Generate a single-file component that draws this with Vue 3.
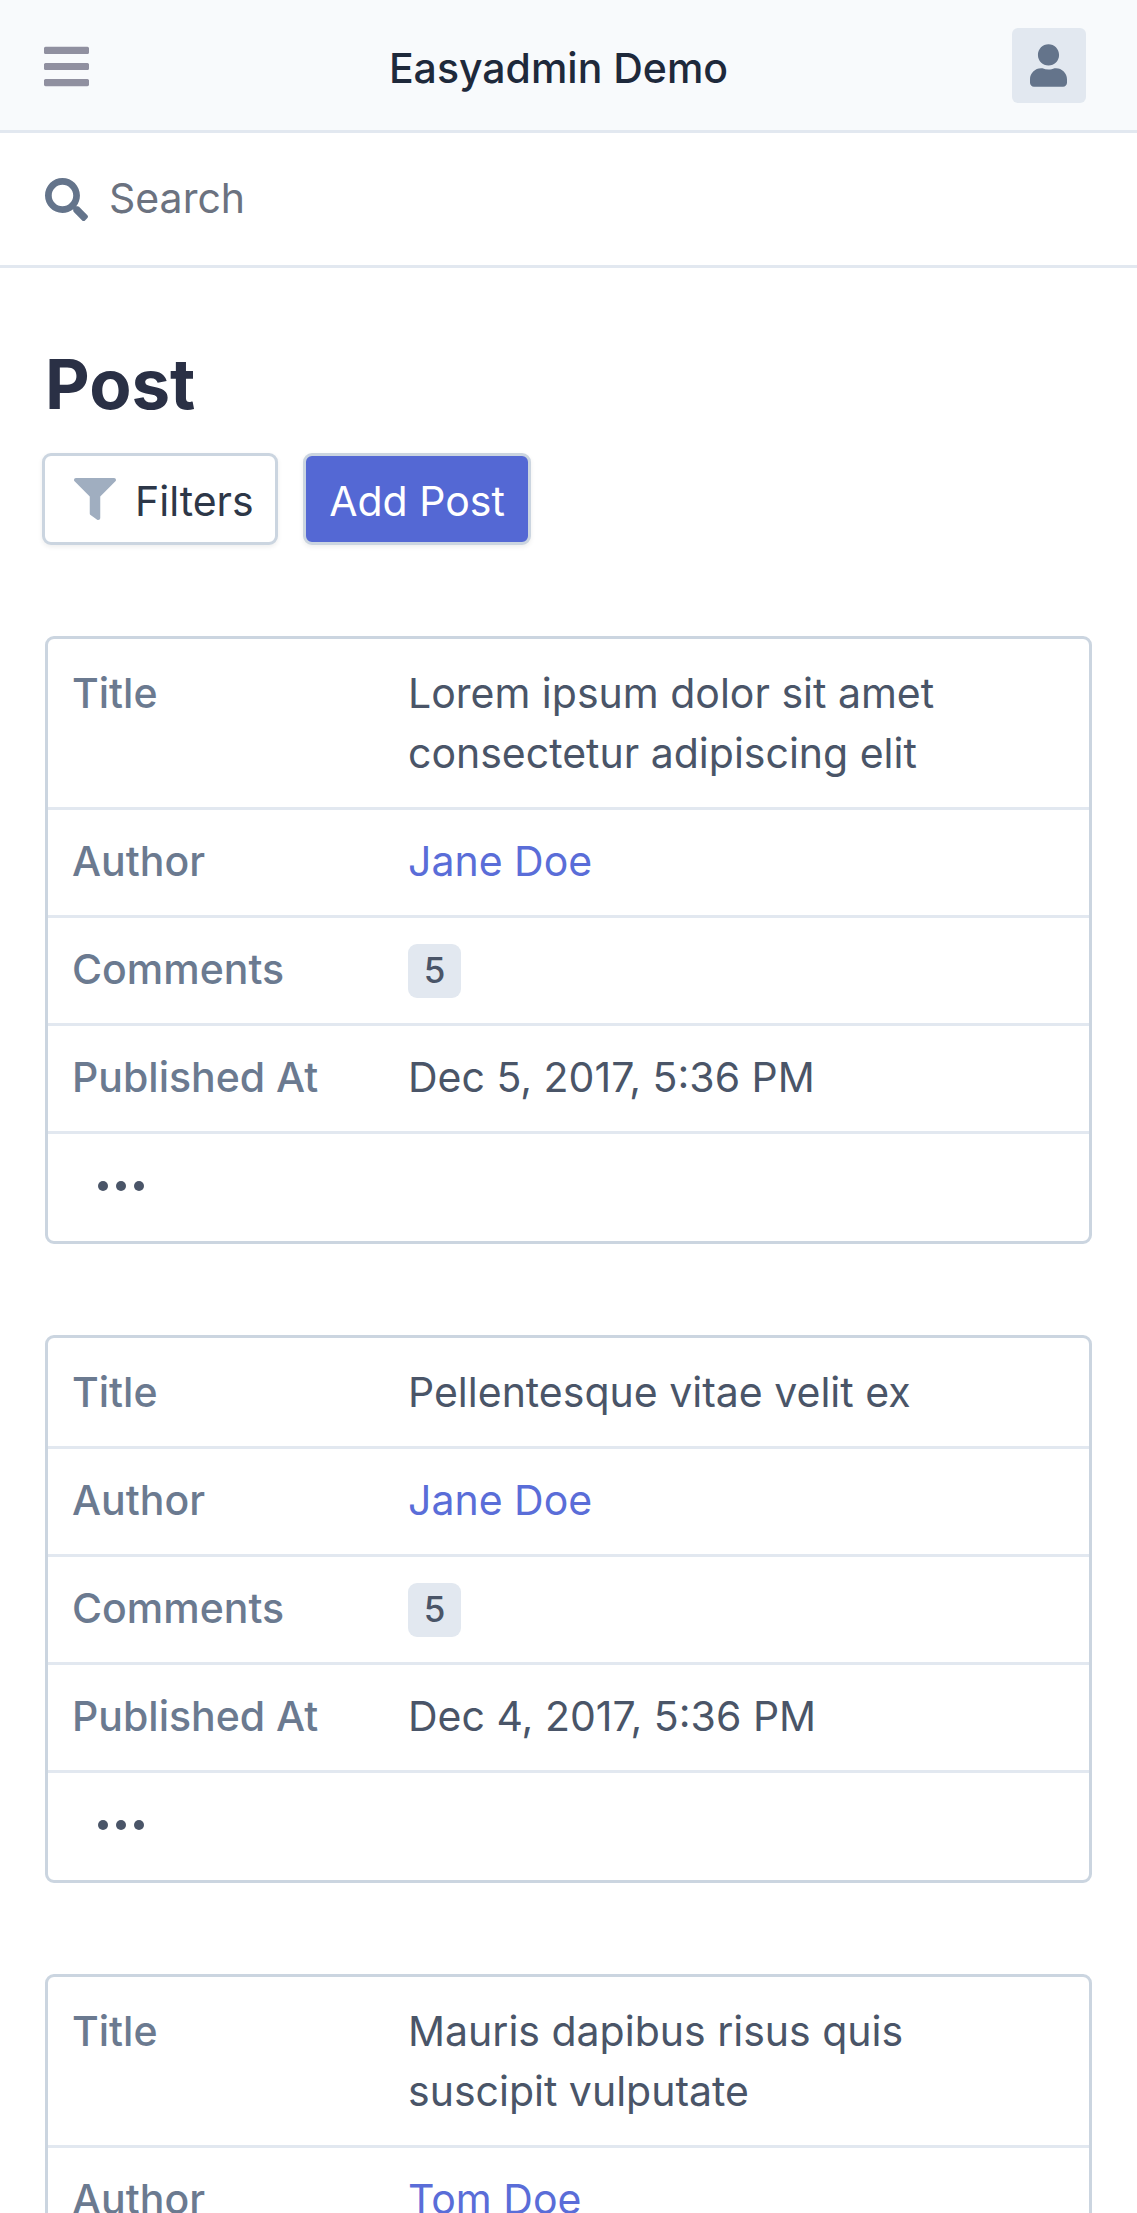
<script setup>
const posts = [
  { title: 'Lorem ipsum dolor sit amet consectetur adipiscing elit', author: 'Jane Doe', comments: 5, published: 'Dec 5, 2017, 5:36 PM' },
  { title: 'Pellentesque vitae velit ex', author: 'Jane Doe', comments: 5, published: 'Dec 4, 2017, 5:36 PM' },
  { title: 'Mauris dapibus risus quis suscipit vulputate', author: 'Tom Doe' },
];
</script>

<template>
  <div class="page">
    <header class="topbar">
      <svg class="menu-icon" viewBox="0 0 448 392" aria-hidden="true">
        <path d="M16 72h416c8.837 0 16-7.163 16-16V16c0-8.837-7.163-16-16-16H16C7.163 0 0 7.163 0 16v40c0 8.837 7.163 16 16 16zm0 160h416c8.837 0 16-7.163 16-16v-40c0-8.837-7.163-16-16-16H16c-8.837 0-16 7.163-16 16v40c0 8.837 7.163 16 16 16zm0 160h416c8.837 0 16-7.163 16-16v-40c0-8.837-7.163-16-16-16H16c-8.837 0-16 7.163-16 16v40c0 8.837 7.163 16 16 16z" />
      </svg>
      <div class="brand">Easyadmin Demo</div>
      <div class="avatar">
        <svg class="user-icon" viewBox="0 0 448 512" aria-hidden="true">
          <path d="M224 256c70.7 0 128-57.3 128-128S294.7 0 224 0 96 57.3 96 128s57.3 128 128 128zm89.6 32h-16.7c-22.2 10.2-46.9 16-72.9 16s-50.6-5.8-72.9-16h-16.7C60.2 288 0 348.2 0 422.4V464c0 26.5 21.5 48 48 48h352c26.5 0 48-21.5 48-48v-41.6c0-74.2-60.2-134.4-134.4-134.4z" />
        </svg>
      </div>
    </header>

    <div class="searchbar">
      <svg class="search-icon" viewBox="0 0 512 512" aria-hidden="true">
        <path d="M505 442.7L405.3 343c-4.5-4.5-10.6-7-17-7H372c27.6-35.3 44-79.7 44-128C416 93.1 322.9 0 208 0S0 93.1 0 208s93.1 208 208 208c48.3 0 92.7-16.4 128-44v16.3c0 6.4 2.5 12.5 7 17l99.7 99.7c9.4 9.4 24.6 9.4 33.9 0l28.3-28.3c9.4-9.4 9.4-24.6.1-34zM208 336c-70.7 0-128-57.2-128-128 0-70.7 57.2-128 128-128 70.7 0 128 57.2 128 128 0 70.7-57.2 128-128 128z" />
      </svg>
      <span class="search-text">Search</span>
    </div>

    <main class="content">
      <h1 class="heading">Post</h1>
      <div class="actions">
        <button class="btn btn-filter">
          <svg class="filter-icon" viewBox="0 0 512 512" aria-hidden="true">
            <path d="M487.976 0H24.028C2.71 0-8.047 25.866 7.058 40.971L192 225.941V432c0 7.831 3.821 15.17 10.237 19.662l80 55.98C298.02 518.69 320 507.493 320 487.98V225.941l184.947-184.97C520.021 25.896 509.338 0 487.976 0z" />
          </svg>
          Filters
        </button>
        <button class="btn btn-add">Add Post</button>
      </div>

      <section v-for="post in posts" :key="post.title" class="card">
        <div class="row row-first">
          <div class="label">Title</div>
          <div class="value">{{ post.title }}</div>
        </div>
        <div class="row">
          <div class="label">Author</div>
          <div class="value"><a class="link">{{ post.author }}</a></div>
        </div>
        <template v-if="post.published">
          <div class="row">
            <div class="label">Comments</div>
            <div class="value"><span class="badge">{{ post.comments }}</span></div>
          </div>
          <div class="row">
            <div class="label">Published At</div>
            <div class="value">{{ post.published }}</div>
          </div>
          <div class="row row-more">
            <span class="dot"></span><span class="dot"></span><span class="dot"></span>
          </div>
        </template>
      </section>
    </main>
  </div>
</template>

<style>
html, body { height: 100%; overflow: hidden; }
</style>

<style scoped>
.page {
  height: 100vh;
  overflow: hidden;
  background: #ffffff;
  color: #4a5568;
  font-family: Inter, 'Liberation Sans', sans-serif;
  font-size: 41px;
  line-height: 60px;
}

.topbar {
  height: 133px;
  box-sizing: border-box;
  display: flex;
  align-items: center;
  justify-content: space-between;
  padding: 0 51px 0 44px;
  background: #f8fafc;
  border-bottom: 3px solid #e2e8f0;
}
.menu-icon {
  width: 45px;
  height: 41px;
  margin-top: 3px;
  fill: #9090a0;
}
.brand {
  margin: 6px 0 0 16px;
  color: #1e293b;
  font-weight: 500;
}
.avatar {
  width: 74px;
  height: 75px;
  margin-top: 1px;
  border-radius: 6px;
  background: #e2e8f0;
  display: flex;
  align-items: center;
  justify-content: center;
}
.user-icon {
  width: 37px;
  height: 43px;
  fill: #64748b;
}

.searchbar {
  height: 135px;
  box-sizing: border-box;
  display: flex;
  align-items: center;
  gap: 21px;
  padding: 0 45px;
  border-bottom: 3px solid #e2e8f0;
}
.search-icon {
  width: 43px;
  height: 43px;
  fill: #64748b;
}
.search-text {
  margin-bottom: 2px;
  color: #6b7280;
}

.content { padding: 0 45px; }
.heading {
  margin: 0;
  padding-top: 78px;
  color: #2a3045;
  font-size: 69px;
  font-weight: 700;
  line-height: 76px;
}
.actions {
  display: flex;
  gap: 25px;
  margin-left: -3px;
  margin-top: 31px;
  margin-bottom: 91px;
}
.btn {
  height: 92px;
  box-sizing: border-box;
  display: flex;
  align-items: center;
  padding-top: 5px;
  border: 3px solid #cbd5e0;
  border-radius: 9px;
  font: inherit;
  box-shadow: 0 2px 5px rgba(0, 0, 0, 0.07);
}
.btn-filter {
  width: 236px;
  padding-left: 29px;
  gap: 19px;
  background: #ffffff;
  color: #2d3748;
}
.filter-icon {
  width: 42px;
  height: 42px;
  margin-top: -4px;
  fill: #a0aec0;
}
.btn-add {
  width: 228px;
  justify-content: center;
  background: #5468d4;
  color: #ffffff;
}

.card {
  border: 3px solid #cbd5e0;
  border-radius: 9px;
  margin-bottom: 91px;
}
.row {
  display: grid;
  grid-template-columns: 336px 1fr;
  padding: 21px 24px 24px;
  border-bottom: 3px solid #e2e8f0;
}
.row-first { padding: 24px 24px 24px; }
.row:last-child { border-bottom: none; }
.label {
  color: #6b7a90;
  font-weight: 500;
}
.value { padding-right: 12px; }
.link { color: #5a6dd8; }
.badge {
  display: inline-block;
  width: 53px;
  height: 54px;
  margin-top: 5px;
  border-radius: 9px;
  background: #e2e8f0;
  font-size: 35px;
  font-weight: 500;
  line-height: 52px;
  text-align: center;
  vertical-align: top;
}
.row-more {
  display: flex;
  align-items: center;
  gap: 8px;
  height: 107px;
  box-sizing: border-box;
  padding: 0 0 4px 50px;
}
.dot {
  width: 10px;
  height: 10px;
  border-radius: 50%;
  background: #4a5568;
}
</style>
